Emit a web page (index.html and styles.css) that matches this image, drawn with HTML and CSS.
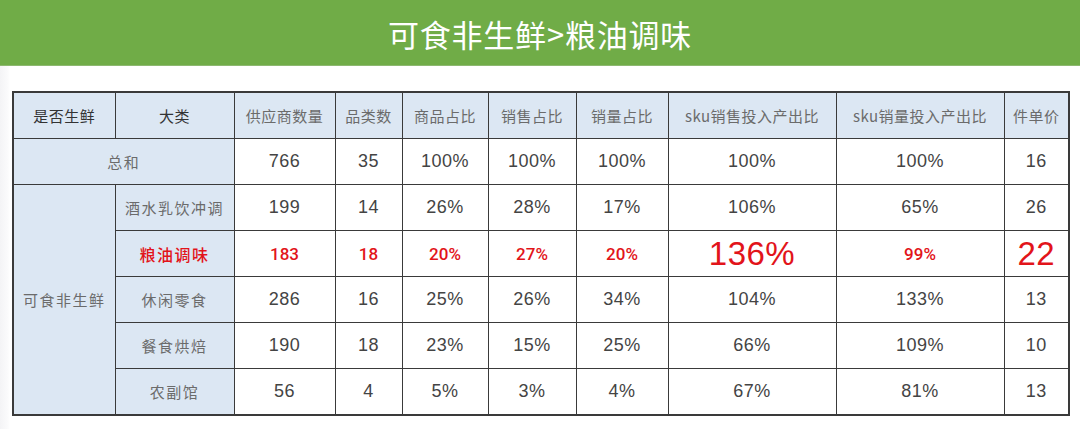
FILE: index.html
```html
<!DOCTYPE html>
<html lang="zh">
<head>
<meta charset="utf-8">
<link rel="stylesheet" href="styles.css">
</head>
<body>
<header class="banner">可食非生鲜&gt;粮油调味</header>
<main class="content">
<table class="grid">
<colgroup>
<col style="width:102px"><col style="width:119px"><col style="width:101px"><col style="width:67px"><col style="width:86px"><col style="width:88px"><col style="width:92px"><col style="width:168px"><col style="width:168px"><col style="width:65px">
</colgroup>
<thead>
<tr>
<th class="dark">是否生鲜</th><th class="dark">大类</th><th>供应商数量</th><th>品类数</th><th>商品占比</th><th>销售占比</th><th>销量占比</th><th>sku销售投入产出比</th><th>sku销量投入产出比</th><th>件单价</th>
</tr>
</thead>
<tbody>
<tr><td class="label" colspan="2">总和</td><td>766</td><td>35</td><td>100%</td><td>100%</td><td>100%</td><td>100%</td><td>100%</td><td>16</td></tr>
<tr><td class="label" rowspan="5">可食非生鲜</td><td class="label">酒水乳饮冲调</td><td>199</td><td>14</td><td>26%</td><td>28%</td><td>17%</td><td>106%</td><td>65%</td><td>26</td></tr>
<tr class="hot"><td class="label">粮油调味</td><td>183</td><td>18</td><td>20%</td><td>27%</td><td>20%</td><td class="big">136%</td><td>99%</td><td class="big">22</td></tr>
<tr><td class="label">休闲零食</td><td>286</td><td>16</td><td>25%</td><td>26%</td><td>34%</td><td>104%</td><td>133%</td><td>13</td></tr>
<tr><td class="label">餐食烘焙</td><td>190</td><td>18</td><td>23%</td><td>15%</td><td>25%</td><td>66%</td><td>109%</td><td>10</td></tr>
<tr><td class="label">农副馆</td><td>56</td><td>4</td><td>5%</td><td>3%</td><td>4%</td><td>67%</td><td>81%</td><td>13</td></tr>
</tbody>
</table>
</main>
</body>
</html>
```

FILE: styles.css
```css
html, body {
  margin: 0;
  padding: 0;
  background: #ffffff;
  font-family: "Liberation Sans", "Noto Sans CJK SC", sans-serif;
}
body {
  width: 1080px;
  height: 429px;
  overflow: hidden;
  background: linear-gradient(to right, #f4f4f6 0, #fbfbfc 8px, #ffffff 10px);
}
.banner {
  height: 65px;
  border-bottom: 1px solid #8db870;
  background: #70ac47;
  color: #ffffff;
  font-family: "Noto Sans CJK SC", sans-serif;
  font-size: 31px;
  line-height: 68px;
  text-align: center;
  letter-spacing: 0.8px;
}
.content {
  padding: 25px 0 0 12px;
}
.grid {
  table-layout: fixed;
  width: 1056px;
  border-collapse: collapse;
  border: 2px solid #3a3a3a;
}
.grid th, .grid td {
  border: 1.5px solid #3a3a3a;
  height: 45px;
  padding: 0;
  text-align: center;
  vertical-align: middle;
  white-space: nowrap;
}
.grid th {
  background: #dce7f3;
  color: #6b6b6b;
  font-family: "Noto Sans CJK SC", sans-serif;
  font-weight: 400;
  font-size: 15px;
  letter-spacing: 0.5px;
}
.grid th.dark {
  color: #333333;
}
.grid td {
  color: #444444;
  font-size: 18px;
  letter-spacing: 0.5px;
}
.grid td.label {
  background: #dce7f3;
  color: #6b6b6b;
  font-family: "Noto Sans CJK SC", sans-serif;
  font-size: 15px;
  letter-spacing: 1.5px;
}
.grid tr.hot td {
  color: #e2141a;
  font-family: Roboto, "Liberation Sans", sans-serif;
  font-size: 17px;
  font-weight: 500;
  letter-spacing: 0;
}
.grid tr.hot td.label {
  color: #e2141a;
  font-family: "Noto Sans CJK SC", sans-serif;
  font-size: 16px;
  font-weight: 500;
  letter-spacing: 1.5px;
}
.grid tr.hot td.big {
  font-family: "Liberation Sans", sans-serif;
  font-size: 33px;
  font-weight: 400;
  letter-spacing: 0.5px;
}
```
